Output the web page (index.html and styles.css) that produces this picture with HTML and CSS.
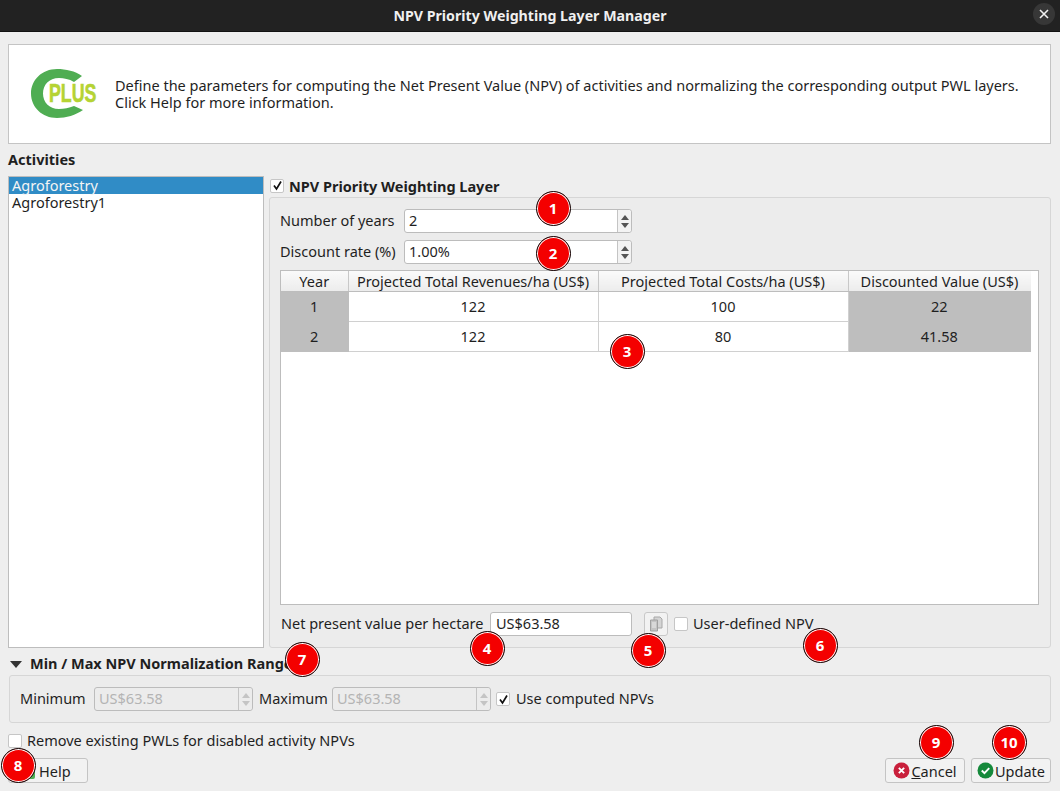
FILE: index.html
```html
<!DOCTYPE html>
<html lang="en">
<head>
    <meta charset="UTF-8">
    <title>NPV Priority Weighting Layer Manager</title>
    <link rel="stylesheet" href="styles.css">
</head>

<body>
    <div class="titlebar">
        <span class="title">NPV Priority Weighting Layer Manager</span>
        <span class="close">
            <svg width="12" height="12" viewBox="0 0 12 12"><path d="M2 2L10 10M10 2L2 10" stroke="#f2f2f2" stroke-width="1.6"/></svg>
        </span>
    </div>

    <div class="dialog">
        <div class="banner">
            <div class="logo">
                <svg width="53" height="50" viewBox="0 0 53 50">
                    <path d="M51 7C44 2 35 0 26 0C11 0 0 11 0 24.500C0 38 11 49 26 49C35 49 45 46 52 41L43 37C38 39 33 40 28 40C18 40 12 33 12 24.500C12 16 18 9 28 9C33 9 38 10 43 13Z" fill="#4fad52"/>
                </svg>
                <span class="logo-text">PLUS</span>
            </div>
            <p>Define the parameters for computing the Net Present Value (NPV) of activities and normalizing the corresponding output PWL layers.<br>Click Help for more information.</p>
        </div>

        <div class="section-label">Activities</div>

        <div class="split">
            <div class="list">
                <div class="list-item selected">Agroforestry</div>
                <div class="list-item">Agroforestry1</div>
            </div>

            <div class="handle"></div>

            <div class="npv">
                <label class="group-title">
                    <span class="check checked"><svg width="11" height="11" viewBox="0 0 11 11"><path d="M2 5.500L4.500 9L9 1.500" fill="none" stroke="#111" stroke-width="1.700"/></svg></span>
                    NPV Priority Weighting Layer
                </label>
                <div class="group npv-group">
                    <div class="field-row">
                        <span class="field-label">Number of years</span>
                        <div class="spin">
                            <span class="spin-value">2</span>
                            <span class="arrows"><i class="up"></i><i class="down"></i></span>
                        </div>
                    </div>
                    <div class="field-row last">
                        <span class="field-label">Discount rate (%)</span>
                        <div class="spin">
                            <span class="spin-value">1.00%</span>
                            <span class="arrows"><i class="up"></i><i class="down"></i></span>
                        </div>
                    </div>

                    <div class="table-wrap">
                        <table>
                            <thead>
                                <tr>
                                    <th class="col-year">Year</th>
                                    <th class="col-rev">Projected Total Revenues/ha (US$)</th>
                                    <th class="col-cost">Projected Total Costs/ha (US$)</th>
                                    <th class="col-disc">Discounted Value (US$)</th>
                                </tr>
                            </thead>
                            <tbody>
                                <tr>
                                    <td class="grey">1</td>
                                    <td>122</td>
                                    <td>100</td>
                                    <td class="grey">22</td>
                                </tr>
                                <tr>
                                    <td class="grey">2</td>
                                    <td>122</td>
                                    <td>80</td>
                                    <td class="grey">41.58</td>
                                </tr>
                            </tbody>
                        </table>
                    </div>

                    <div class="npv-row">
                        <span class="npv-label">Net present value per hectare</span>
                        <div class="text-input">US$63.58</div>
                        <span class="copy-btn">
                            <svg width="14" height="16" viewBox="0 0 14 16">
                                <path d="M5 1H11L13 3V12H5Z" fill="#d4d4d4" stroke="#a8a8a8"/>
                                <path d="M1.500 4H8.500V15H1.500Z" fill="#c4c4c4" stroke="#a0a0a0"/>
                                <path d="M3 7H7M3 9H7M3 11H7" stroke="#ececec"/>
                            </svg>
                        </span>
                        <span class="check"></span>
                        <span class="user-label">User-defined NPV</span>
                    </div>
                </div>
            </div>
        </div>

        <div class="range-title"><i class="triangle"></i>Min / Max NPV Normalization Range</div>
        <div class="group range-group">
            <span class="min-label">Minimum</span>
            <div class="spin disabled">
                <span class="spin-value">US$63.58</span>
                <span class="arrows"><i class="up"></i><i class="down"></i></span>
            </div>
            <span class="max-label">Maximum</span>
            <div class="spin disabled">
                <span class="spin-value">US$63.58</span>
                <span class="arrows"><i class="up"></i><i class="down"></i></span>
            </div>
            <span class="check checked"><svg width="11" height="11" viewBox="0 0 11 11"><path d="M2 5.500L4.500 9L9 1.500" fill="none" stroke="#111" stroke-width="1.700"/></svg></span>
            <span class="use-label">Use computed NPVs</span>
        </div>

        <div class="remove-row">
            <span class="check"></span>
            <span class="remove-label">Remove existing PWLs for disabled activity NPVs</span>
        </div>

        <div class="buttons">
            <button class="btn help-btn"><i class="help-icon"></i>Help</button>
            <div class="buttons-right">
                <button class="btn">
                    <svg width="17" height="17" viewBox="0 0 16 16"><circle cx="8" cy="8" r="7.500" fill="#c9203c"/><path d="M5.500 5.500L10.500 10.500M10.500 5.500L5.500 10.500" stroke="#fff" stroke-width="1.800"/></svg>
                    <span><u>C</u>ancel</span>
                </button>
                <button class="btn">
                    <svg width="17" height="17" viewBox="0 0 16 16"><circle cx="8" cy="8" r="7.500" fill="#15893b"/><path d="M4.500 8L7 10.500L11.500 5.800" fill="none" stroke="#fff" stroke-width="1.800"/></svg>
                    <span>Update</span>
                </button>
            </div>
        </div>
    </div>

    <span class="badge b1">1</span>
    <span class="badge b2">2</span>
    <span class="badge b3">3</span>
    <span class="badge b4">4</span>
    <span class="badge b5">5</span>
    <span class="badge b6">6</span>
    <span class="badge b7">7</span>
    <span class="badge b8">8</span>
    <span class="badge b9">9</span>
    <span class="badge b10">10</span>
</body>
</html>
```

FILE: styles.css
```css
* {
    box-sizing: border-box;
}

html,
body {
    margin: 0;
    padding: 0;
    height: 791px;
    overflow: hidden;
}

body {
    position: relative;
    font-family: "Noto Sans", "Open Sans", sans-serif;
    font-size: 14.5px;
    color: #1f1f1f;
    background-color: #eeeeee;
}

.titlebar {
    height: 32px;
    background-color: #222222;
    border-bottom: 1px solid #111;
    display: flex;
    align-items: center;
    justify-content: center;
    position: relative;
}

.title {
    color: #f0f0f0;
    font-weight: bold;
    font-size: 14.2px;
}

.close {
    position: absolute;
    right: 5px;
    top: 3px;
    width: 22px;
    height: 22px;
    border-radius: 50%;
    background-color: #373737;
    display: flex;
    align-items: center;
    justify-content: center;
}

.dialog {
    padding: 12px 9px 0 8px;
}

.banner {
    height: 100px;
    background-color: white;
    border: 1px solid #c4c4c4;
    display: flex;
    align-items: center;
    padding-left: 22px;
}

.logo {
    flex: none;
    position: relative;
    width: 66px;
    height: 50px;
    margin-right: 18px;
}

.logo svg {
    display: block;
}

.logo-text {
    position: absolute;
    left: 18px;
    top: 10px;
    font-family: "Liberation Sans", sans-serif;
    font-weight: bold;
    font-size: 25px;
    line-height: 29px;
    color: #b5d334;
    -webkit-text-stroke: 0.6px #b5d334;
    transform: scaleX(0.71);
    transform-origin: left center;
}

.banner p {
    margin: 0;
    line-height: 17px;
    white-space: nowrap;
}

.section-label {
    font-weight: bold;
    height: 32px;
    padding-top: 7px;
    line-height: 17px;
}

.split {
    display: flex;
    height: 472px;
}

.list {
    width: 256px;
    background-color: white;
    border: 1px solid #bdbdbd;
    flex: none;
}

.list-item {
    height: 17px;
    line-height: 17px;
    padding-left: 3px;
}

.list-item.selected {
    background-color: #308cc6;
    color: #f4f4f4;
}

.handle {
    width: 5px;
    flex: none;
}

.npv {
    flex: 1;
    display: flex;
    flex-direction: column;
}

.group-title {
    display: flex;
    align-items: center;
    gap: 5px;
    height: 21px;
    padding: 0 0 2px 1px;
    font-weight: bold;
}

.check {
    width: 14px;
    height: 14px;
    flex: none;
    background-color: white;
    border: 1px solid #c6c6c6;
    border-radius: 2px;
    display: inline-flex;
    align-items: center;
    justify-content: center;
}

.group {
    border: 1px solid #d6d6d6;
    border-radius: 3px;
    background-color: #ececec;
}

.npv-group {
    flex: 1;
    padding: 11px 11px 0 10px;
}

.field-row {
    display: flex;
    align-items: center;
    height: 24px;
    margin-bottom: 7px;
}

.field-row.last {
    margin-bottom: 6px;
}

.field-label {
    width: 124px;
    flex: none;
    padding-bottom: 2px;
}

.spin {
    width: 228px;
    height: 24px;
    flex: none;
    display: flex;
    background-color: white;
    border: 1px solid #bcbcbc;
    border-radius: 3px;
}

.spin-value {
    flex: 1;
    padding-left: 4px;
    line-height: 21px;
}

.arrows {
    width: 14px;
    flex: none;
    border-left: 1px solid #c4c4c4;
    background-color: #f3f3f3;
    border-radius: 0 3px 3px 0;
    display: flex;
    flex-direction: column;
    align-items: center;
    justify-content: center;
    gap: 3px;
}

.arrows i {
    width: 0;
    height: 0;
    border-left: 4px solid transparent;
    border-right: 4px solid transparent;
}

.arrows .up {
    border-bottom: 5px solid #555;
}

.arrows .down {
    border-top: 5px solid #555;
}

.spin.disabled {
    width: 159px;
    background-color: #ececec;
    color: #b4b4b4;
}

.spin.disabled .arrows {
    background-color: #ececec;
}

.spin.disabled .up {
    border-bottom-color: #c4c4c4;
}

.spin.disabled .down {
    border-top-color: #c4c4c4;
}

.table-wrap {
    height: 335px;
    background-color: white;
    border: 1px solid #bdbdbd;
}

table {
    border-collapse: collapse;
    table-layout: fixed;
    width: 750px;
}

th {
    height: 20px;
    padding: 0;
    font-weight: normal;
    background: linear-gradient(#fafafa, #ececec);
    border-right: 1px solid #c8c8c8;
    border-bottom: 1px solid #bdbdbd;
}

th:last-child {
    border-right: none;
}

.col-year {
    width: 67px;
}

.col-rev,
.col-cost {
    width: 250px;
}

td {
    height: 30px;
    padding: 0 0 2px 0;
    text-align: center;
    border-right: 1px solid #d0d0d0;
    border-bottom: 1px solid #d0d0d0;
}

td.grey {
    background-color: #bebebe;
    border-color: #bebebe;
}

.npv-row {
    display: flex;
    align-items: center;
    height: 24px;
    margin-top: 7px;
}

.npv-label {
    width: 210px;
    flex: none;
    padding: 0 0 2px 1px;
    white-space: nowrap;
}

.user-label {
    padding-bottom: 2px;
}

.text-input {
    width: 142px;
    height: 24px;
    padding-left: 5px;
    line-height: 21px;
    background-color: white;
    border: 1px solid #bcbcbc;
    border-radius: 3px;
}

.copy-btn {
    width: 24px;
    height: 24px;
    margin-left: 12px;
    margin-right: 6px;
    border: 1px solid #c8c8c8;
    border-radius: 3px;
    background-color: #f2f2f2;
    display: flex;
    align-items: center;
    justify-content: center;
}

.npv-row .check {
    margin-right: 5px;
}

.range-title {
    height: 27px;
    padding: 7px 0 0 2px;
    font-weight: bold;
    line-height: 17px;
    display: flex;
    align-items: flex-start;
}

.triangle {
    width: 0;
    height: 0;
    margin: 6px 8px 0 0;
    border-left: 6px solid transparent;
    border-right: 6px solid transparent;
    border-top: 7px solid #333;
}

.range-group {
    height: 48px;
    margin-left: 1px;
    padding-left: 10px;
    display: flex;
    align-items: center;
}

.min-label {
    width: 74px;
    padding-bottom: 2px;
}

.max-label {
    margin: 0 6px;
    width: 67px;
    padding-bottom: 2px;
    white-space: nowrap;
}

.use-label,
.remove-label {
    padding-bottom: 2px;
}

.range-group .check {
    margin: 0 6px 0 5px;
}

.remove-row {
    display: flex;
    align-items: center;
    gap: 5px;
    height: 17px;
    margin-top: 9px;
}

.buttons {
    display: flex;
    justify-content: space-between;
    margin-top: 9px;
}

.buttons-right {
    display: flex;
    gap: 6px;
}

.btn {
    width: 80px;
    height: 25px;
    padding: 0;
    font: inherit;
    color: inherit;
    background-color: #f2f2f2;
    border: 1px solid #c4c4c4;
    border-radius: 3px;
    display: flex;
    align-items: center;
    justify-content: center;
    gap: 1px;
}

.help-btn {
    justify-content: flex-start;
    padding-left: 10px;
    gap: 4px;
}

.help-icon {
    width: 16px;
    height: 16px;
    background-color: #4fad52;
    border-radius: 2px;
}

.badge {
    position: absolute;
    width: 35px;
    height: 35px;
    margin: -17.5px 0 0 -17.5px;
    border-radius: 50%;
    background-color: #f40000;
    border: 1px solid #111;
    box-shadow: inset 0 0 0 1px #fff;
    color: white;
    font-weight: bold;
    font-size: 15px;
    display: flex;
    align-items: center;
    justify-content: center;
}

.b1 { left: 553px; top: 208px; }
.b2 { left: 553px; top: 253px; }
.b3 { left: 627px; top: 351px; }
.b4 { left: 487px; top: 648px; }
.b5 { left: 648px; top: 650px; }
.b6 { left: 820px; top: 645px; }
.b7 { left: 302px; top: 659px; }
.b8 { left: 18px; top: 765px; }
.b9 { left: 936px; top: 742px; }
.b10 { left: 1009px; top: 742px; }
```
